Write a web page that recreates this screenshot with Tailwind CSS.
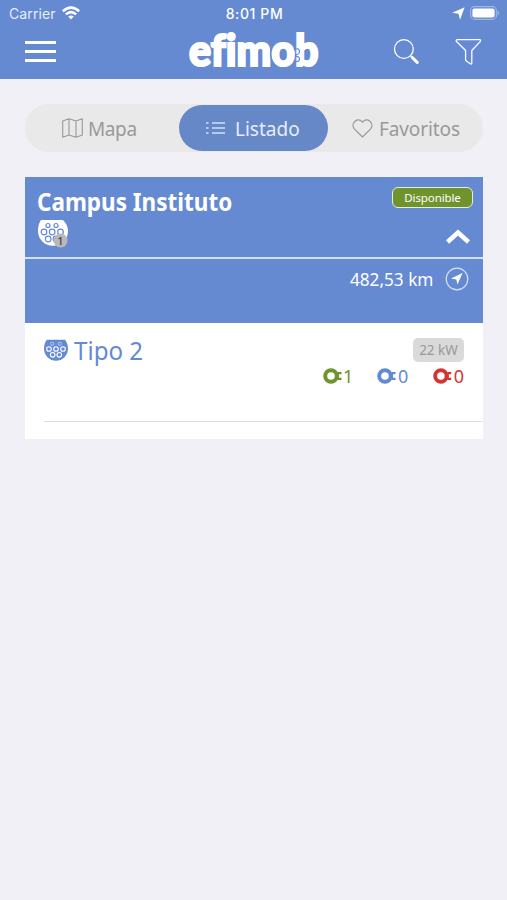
<!DOCTYPE html>
<html lang="es">

<head>
    <meta charset="UTF-8">
    <meta name="viewport" content="width=device-width, initial-scale=1.0">
    <script src="https://cdn.jsdelivr.net/npm/@tailwindcss/browser@4"></script>
    <title>efimob</title>
</head>

<body class="bg-[#f0f0f6] font-['Noto_Sans','Open_Sans',sans-serif]">
    <header class="h-[79px] bg-[#658ad2] text-white">
        <!-- status bar -->
        <div class="grid grid-cols-3 h-[27px] items-center pl-[9px] pr-[7px] font-['Inter',sans-serif] text-[14px] leading-[27px]">
            <div class="flex items-center gap-[6px] text-[#e6edfb]">
                <span class="tracking-[0.1px]">Carrier</span>
                <svg class="w-[18px] h-[14px] -mt-[2px]" viewBox="0 0 18 14" fill="none" stroke="#fff" stroke-width="2.5">
                    <path d="M.8 5.2Q9-2 17.2 5.2M3.8 8.4q5.2-4.6 10.4 0" />
                    <path d="M6.2 10.6q2.8-2.4 5.6 0L9 13.6z" fill="#fff" stroke="none" />
                </svg>
            </div>
            <p class="text-center font-medium text-[14px] tracking-[0.6px] whitespace-nowrap">8:01 PM</p>
            <div class="flex items-center justify-end gap-[5px] -mt-[1px]">
                <svg class="w-[13px] h-[13px]" viewBox="0 0 12 12" fill="#fff">
                    <path d="M11.700.3 7.400 11.800 6 6.200 .2 5.200z" />
                </svg>
                <svg class="w-[30px] h-[14px]" viewBox="0 0 30 14">
                    <rect x=".6" y=".6" width="25.8" height="12.8" rx="4" fill="none" stroke="#9eb6e4" stroke-width="1.1" />
                    <rect x="2.4" y="2.4" width="22.2" height="9.2" rx="2" fill="#fff" />
                    <path d="M27.6 4.5q3 2.5 0 5z" fill="#9eb6e4" />
                </svg>
            </div>
        </div>
        <!-- nav bar -->
        <div class="flex h-[52px] pl-[25px] pr-[24px]">
            <button class="flex flex-col gap-[6px] w-[31px] mt-[14px]">
                <span class="h-[3px] w-full bg-white"></span>
                <span class="h-[3px] w-full bg-white"></span>
                <span class="h-[3px] w-full bg-white"></span>
            </button>
            <svg class="w-[132px] h-[44px] ml-[132px] overflow-visible [font-variant-ligatures:none]" viewBox="188 27 132 44">
                <text x="189" y="65.500" textLength="129.500" lengthAdjust="spacingAndGlyphs" fill="#fff" stroke="#fff" stroke-width="2.200" font-family="Lato" font-weight="900" font-size="44">efimob</text>
                <!-- seams around the "o" and the puzzle tab next to the "b" -->
                <g fill="none" stroke="#658ad2" stroke-width="1.200">
                    <path d="M277 41.500q-7 4-6.500 12.500t7 12.500" />
                    <path d="M293 43q2 3 1.500 6.500q4-2 5 1.500q0 4-4 3.500v2q4-.5 4 3q-1 3-5 1.500q1 3-2 6" />
                </g>
            </svg>
            <svg class="w-[27px] h-[27px] ml-[73px] mt-[11px]" viewBox="0 0 27 27" fill="none" stroke="#fff">
                <circle cx="11" cy="11" r="9.500" stroke-width="1.3" />
                <path d="m18 18 1.500 1.500" stroke-width="1.500" />
                <path d="m19.500 19.500 5 5" stroke-width="3" stroke-linecap="round" />
            </svg>
            <svg class="w-[28px] h-[28px] ml-[36px] mt-[11px]" viewBox="0 0 28 28" fill="none" stroke="#fff" stroke-width="1.3" stroke-linejoin="round">
                <path d="M2.500 1.500h22q2 0 1.200 1.700L17 12.500v12.800q-.2 1.400-1.500.7L11.500 23q-.8-.5-.8-1.500v-9L1.300 3.200Q.8 1.500 2.500 1.500z" />
            </svg>
        </div>
    </header>

    <main class="px-[25px]">
        <nav class="flex items-center w-[458px] h-[48px] mt-[25px] rounded-full bg-[#e9e9e9] text-[#999] text-[19px]">
            <a class="flex items-center w-[154px] pl-[37px] gap-[5px]">
                <svg class="w-[21px] h-[20px]" viewBox="0 0 21 20" fill="none" stroke="#999" stroke-width="1.1" stroke-linejoin="round">
                    <path d="M.7 3 7 .7l7 2.300L20.300.7V17L14 19.300 7 17 .7 19.300zM7 .7V17M14 3v16.300" />
                </svg>
                <span class="mt-[2px] tracking-[-0.4px]">Mapa</span>
            </a>
            <a class="flex items-center w-[149px] h-[46px] pl-[27px] gap-[10px] rounded-full bg-[#6788c7] text-[#e6edfb]">
                <svg class="w-[19px] h-[14px]" viewBox="0 0 19 14" stroke="#d3dff7" stroke-width="1.500">
                    <path d="M0 2h2.500M0 7h2.500M0 12h2.500M6 2h13M6 7h13M6 12h13" />
                </svg>
                <span class="mt-[2px]">Listado</span>
            </a>
            <a class="flex items-center pl-[24px] gap-[6px]">
                <svg class="w-[21px] h-[19px]" viewBox="0 0 21 19" fill="none" stroke="#999" stroke-width="1.2">
                    <path d="M10.500 18 2.300 9.800C-2 4.500 6-3 10.500 3.200 15-3 23 4.500 18.700 9.800z" />
                </svg>
                <span class="mt-[2px] tracking-[-0.1px]">Favoritos</span>
            </a>
        </nav>

        <section class="mt-[25px] h-[262px] w-[458px] bg-white">
            <div class="flex justify-between h-[80px] pl-[12px] pr-[10px] bg-[#658ad2] text-white">
                <div>
                    <h1 class="pt-[8px] text-[25px] leading-[33px] font-bold origin-left scale-x-[0.9]">Campus Instituto</h1>
                    <svg class="w-[32px] h-[29px] mt-[1px]" viewBox="0 0 32 29">
                        <path d="M4 1h22q5 5 5 11a15 14.800 0 0 1-30 0Q1 5 4 1z" fill="#fff" />
                        <g fill="none" stroke="#658ad2" stroke-width="1.2">
                            <circle cx="11" cy="6.500" r="2" />
                            <circle cx="19" cy="6.500" r="2" />
                            <circle cx="7" cy="13" r="2.800" />
                            <circle cx="15.200" cy="13" r="2.800" />
                            <circle cx="23.500" cy="13" r="2.800" />
                            <circle cx="11.200" cy="20" r="2.800" />
                            <circle cx="19" cy="20" r="2.800" />
                        </g>
                        <circle cx="23.500" cy="21.500" r="7" fill="#b9b9b9" />
                        <text x="23.500" y="25.500" text-anchor="middle" font-family="Noto Sans" font-weight="500" font-size="11" fill="#444">1</text>
                    </svg>
                </div>
                <div class="flex flex-col items-end pt-[10px]">
                    <span class="flex items-center justify-center w-[81px] h-[21px] rounded-[6px] border-[1.500px] border-[#e6f0d8] bg-[#6f942d] text-[11.500px] tracking-[-0.1px]">Disponible</span>
                    <svg class="w-[24px] h-[16px] mt-[21px] mr-[3px]" viewBox="0 0 24 16" fill="none" stroke="#fff" stroke-width="4.500">
                        <path d="M1.500 13 12 3.500 22.500 13" />
                    </svg>
                </div>
            </div>
            <div class="flex justify-end h-[66px] pt-[8px] pr-[14px] gap-[12px] border-t-2 border-[#d3dff5] bg-[#658ad2] text-white">
                <span class="text-[18px] leading-[24px] origin-right scale-x-[0.955]">482,53 km</span>
                <svg class="w-[24px] h-[24px]" viewBox="0 0 24 24" fill="none">
                    <circle cx="12" cy="12" r="10.800" stroke="#d6e1f7" stroke-width="1.2" />
                    <path d="M17.500 6 12.500 17.500 11.300 12.500 6 11.500z" fill="#fff" />
                </svg>
            </div>
            <div class="ml-[19px] h-[99px] border-b border-[#dedee0] flex justify-between pt-[15px] pr-[19px]">
                <div class="flex text-[#658ad2]">
                    <svg class="w-[24px] h-[23px] mt-[1px]" viewBox="0 0 24 23">
                        <path d="M3 .7h18q3 3.500 3 9a12 12 0 0 1-24 0Q0 4 3 .7z" fill="#658ad2" />
                        <g fill="none" stroke="#fff" stroke-width="1.100">
                            <circle cx="8.300" cy="4.800" r="1.600" stroke="#a9bfe8" />
                            <circle cx="15.700" cy="4.800" r="1.600" stroke="#a9bfe8" />
                            <circle cx="5" cy="10" r="2.300" />
                            <circle cx="12" cy="10" r="2.300" />
                            <circle cx="19" cy="10" r="2.300" />
                            <circle cx="8.700" cy="15.800" r="2.300" />
                            <circle cx="15.300" cy="15.800" r="2.300" />
                        </g>
                    </svg>
                    <h2 class="ml-[6px] -mt-[4px] text-[25px] leading-[33px] origin-left scale-x-[0.965]">Tipo 2</h2>
                </div>
                <div class="flex flex-col items-end">
                    <span class="flex items-center justify-center w-[51px] h-[24px] rounded-[5px] bg-[#dadada] text-[#999] text-[13.500px] pt-[1px]">22 kW</span>
                    <div class="flex mt-[3px] text-[18px] leading-[22px]">
                        <span class="flex items-center w-[54px] text-[#6f942d]">
                            <svg class="w-[20px] h-[16px]" viewBox="0 0 20 16" fill="none" stroke="currentColor">
                                <circle cx="8" cy="8" r="5.800" stroke-width="4" />
                                <path d="M13 8h3" stroke-width="7" />
                                <path d="M15 5.200h3.500M15 10.800h3.500" stroke-width="2.300" />
                            </svg>1</span>
                        <span class="flex items-center w-[56px] text-[#658ad2]">
                            <svg class="w-[21px] h-[16px]" viewBox="0 0 21 16" fill="none" stroke="currentColor">
                                <circle cx="8" cy="8" r="5.800" stroke-width="4" />
                                <path d="M13 8h3" stroke-width="7" />
                                <path d="M15 5.200h3.500M15 10.800h3.500" stroke-width="2.300" />
                            </svg>0</span>
                        <span class="flex items-center w-[31px] text-[#d33535]">
                            <svg class="w-[21px] h-[16px]" viewBox="0 0 21 16" fill="none" stroke="currentColor">
                                <circle cx="8" cy="8" r="5.800" stroke-width="4" />
                                <path d="M13 8h3" stroke-width="7" />
                                <path d="M15 5.200h3.500M15 10.800h3.500" stroke-width="2.300" />
                            </svg>0</span>
                    </div>
                </div>
            </div>
        </section>
    </main>
</body>

</html>
